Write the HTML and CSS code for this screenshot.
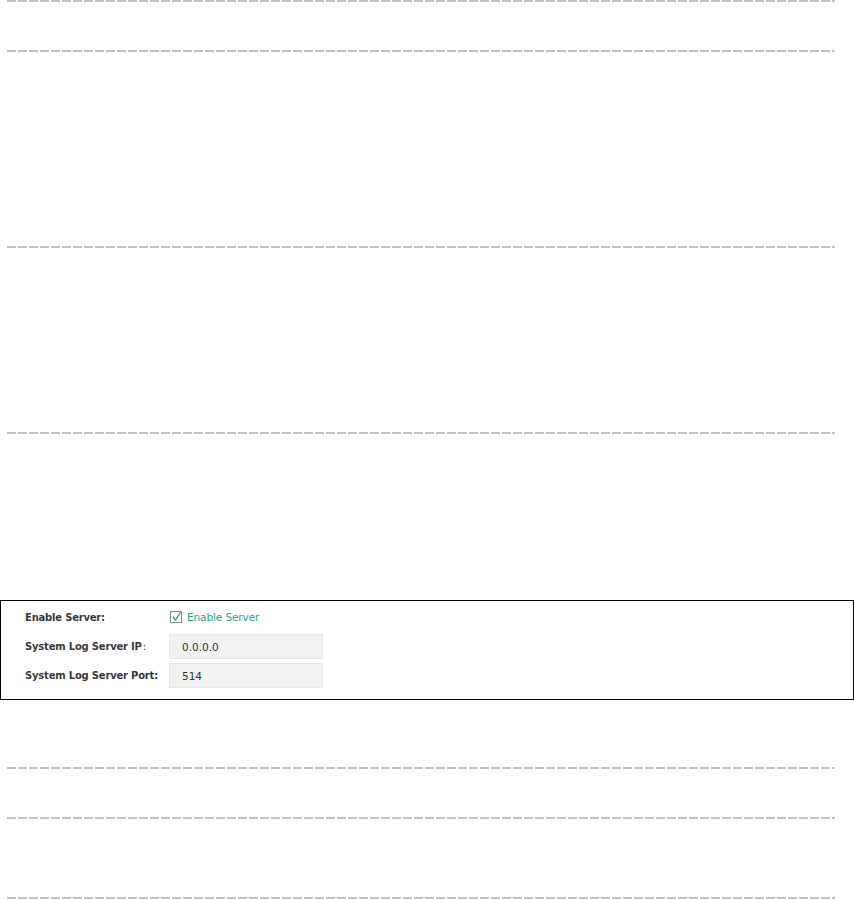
FILE: index.html
```html
<!DOCTYPE html>
<html>
<head>
<meta charset="utf-8">
<link rel="stylesheet" href="styles.css">
</head>
<body>
<div class="page">
  <div class="sep"></div>
  <div class="gap g48"></div>
  <div class="sep"></div>
  <div class="gap g194"></div>
  <div class="sep"></div>
  <div class="gap g184"></div>
  <div class="sep"></div>
  <div class="gap g166"></div>
  <div class="box">
    <div class="row r1">
      <div class="label">Enable Server:</div>
      <label class="check">
        <span class="cbox"><svg width="12" height="12" viewBox="0 0 12 12"><path d="M3 5.5 L5.5 9 L10.5 1.5" fill="none" stroke="#1aa58a" stroke-width="1.3"/></svg></span>
        <span class="ctext">Enable Server</span>
      </label>
    </div>
    <div class="row r2">
      <div class="label">System Log Server IP<span class="colon">:</span></div>
      <div class="input">0.0.0.0</div>
    </div>
    <div class="row r3">
      <div class="label">System Log Server Port:</div>
      <div class="input">514</div>
    </div>
  </div>
  <div class="gap g67"></div>
  <div class="sep"></div>
  <div class="gap g48"></div>
  <div class="sep"></div>
  <div class="gap g78"></div>
  <div class="sep"></div>
</div>
</body>
</html>
```

FILE: styles.css
```css
html, body {
  margin: 0;
  padding: 0;
  background: #ffffff;
}
.page {
  width: 854px;
  display: flex;
  flex-direction: column;
}
.sep {
  height: 2px;
  margin-left: 7px;
  width: 828px;
  background: repeating-linear-gradient(to right, #c2c2c2 0 9px, transparent 9px 11px);
}
.gap { flex: none; }
.g48 { height: 48px; }
.g194 { height: 194px; }
.g184 { height: 184px; }
.g166 { height: 166px; }
.g67 { height: 67px; }
.g78 { height: 78px; }
.box {
  box-sizing: border-box;
  height: 100px;
  width: 854px;
  border: 1px solid #000;
  padding: 4px 0 0 24px;
  display: flex;
  flex-direction: column;
  font-family: "DejaVu Sans", Verdana, sans-serif;
}
.row {
  display: flex;
  align-items: center;
}
.r1 { height: 24px; }
.r2 { height: 25px; margin-top: 5px; }
.r3 { height: 25px; margin-top: 4px; }
.label {
  width: 144px;
  font-size: 10px;
  font-weight: bold;
  color: #3a3a3a;
  letter-spacing: -0.2px;
}
.colon { margin-left: 1px; font-weight: normal; }
.check {
  display: flex;
  align-items: center;
  gap: 5px;
  margin-left: 1px;
}
.cbox {
  box-sizing: border-box;
  width: 12px;
  height: 12px;
  border: 1px solid #8a8a8a;
  display: flex;
}
.cbox svg { display: block; margin: -1px; }
.ctext {
  font-size: 10.5px;
  color: #1aa58a;
  letter-spacing: -0.1px;
}
.input {
  box-sizing: border-box;
  width: 154px;
  height: 25px;
  background: #f1f1f1;
  border: 1px solid #e8e8e8;
  padding-left: 12px;
  font-size: 10.5px;
  color: #333;
  display: flex;
  align-items: center;
}
```
